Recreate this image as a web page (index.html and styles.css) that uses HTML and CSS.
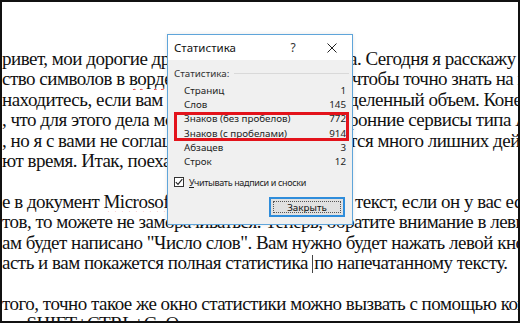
FILE: index.html
```html
<!DOCTYPE html>
<html lang="ru">

<head>
    <meta charset="UTF-8">
    <title>Статистика</title>
    <link rel="stylesheet" href="styles.css">
</head>

<body>
    <div class="screen">
        <!-- Document text behind the dialog -->
        <div class="doc">
            <p class="ln split"><span class="l">ривет, мои дорогие друзья и гости</span><span class="r">а. Сегодня я расскажу вам</span></p>
            <p class="ln split"><span class="l">ство символов в <span class="typo">ворде</span>, чтобы</span><span class="r pad2">чтобы точно знать на каком</span></p>
            <p class="ln split"><span class="l">находитесь, если вам нужен опре</span><span class="r">деленный объем. Конечно</span></p>
            <p class="ln split"><span class="l">, что для этого дела можно использовать</span><span class="r">ронние сервисы типа <span class="typo">Адвего</span></span></p>
            <p class="ln split"><span class="l">, но я с вами не соглашусь, потому что</span><span class="r">тся много лишних действий</span></p>
            <p class="ln">ют время. Итак, поехали.</p>
            <p class="ln">&nbsp;</p>
            <p class="ln split"><span class="l">е в документ <span class="typo">Microsoft</span> Word уже есть</span><span class="r pad6">текст, если он у вас есть</span></p>
            <p class="ln">тов, то можете не заморачиваться. Теперь, обратите внимание в левый</p>
            <p class="ln">ам будет написано "Число слов". Вам нужно будет нажать левой кнопкой</p>
            <p class="ln">асть и вам покажется полная статистика <span class="caret"></span>по напечатанному тексту.</p>
            <p class="ln">&nbsp;</p>
            <p class="ln">того, точно такое же окно статистики можно вызвать с помощью комбинации</p>
            <p class="ln">ом SHIFT+CTRL+G. Она откроется сразу же.</p>
        </div>

        <!-- Word count dialog -->
        <div class="dialog">
            <div class="titlebar">
                <span class="title">Статистика</span>
                <span class="help">?</span>
                <span class="close">
                    <svg width="10" height="10" viewBox="0 0 10 10">
                        <path d="M0.5 0.5 L9.5 9.5 M9.5 0.5 L0.5 9.5" stroke="#222" stroke-width="1" fill="none" />
                    </svg>
                </span>
            </div>
            <div class="dlg-body">
                <div class="group">
                    <span>Статистика:</span>
                    <span class="rule"></span>
                </div>
                <div class="stats">
                    <div class="row"><span>Страниц</span><span>1</span></div>
                    <div class="row"><span>Слов</span><span>145</span></div>
                    <div class="hl">
                        <div class="row"><span>Знаков (без пробелов)</span><span>772</span></div>
                        <div class="row"><span>Знаков (с пробелами)</span><span>914</span></div>
                    </div>
                    <div class="row"><span>Абзацев</span><span>3</span></div>
                    <div class="row"><span>Строк</span><span>12</span></div>
                </div>
                <div class="check-row">
                    <span class="checkbox">
                        <svg width="8" height="8" viewBox="0 0 8 8">
                            <path d="M0.8 4.2 L3 6.4 L7.3 1.2" stroke="#222" stroke-width="1.1" fill="none" />
                        </svg>
                    </span>
                    <span class="check-label"><u>У</u>читывать надписи и сноски</span>
                </div>
                <div class="actions">
                    <button class="btn">Закрыть</button>
                </div>
            </div>
        </div>
    </div>
</body>

</html>
```

FILE: styles.css
```css
body {
    margin: 0;
    padding: 0;
    background: #fff;
}

.screen {
    position: relative;
    width: 520px;
    height: 323px;
    box-sizing: border-box;
    border: 2px solid #111;
    overflow: hidden;
    background: #fff;
}

/* Document text */
.doc {
    padding-top: 47px;
    font-family: "Liberation Serif", "Times New Roman", serif;
    font-size: 19px;
    letter-spacing: -0.5px;
    color: #111;
}

.ln {
    margin: 0;
    height: 20.4px;
    line-height: 20.4px;
    white-space: nowrap;
    overflow: hidden;
}

.split {
    display: flex;
}

.split .l {
    flex: none;
    width: 347px;
    overflow: hidden;
}

.split .r {
    flex: none;
}

.pad2 {
    padding-left: 3px;
}

.pad6 {
    padding-left: 6px;
}

.typo {
    text-decoration: underline wavy #e0262b;
    text-decoration-thickness: 1px;
    text-underline-offset: 3px;
}

.caret {
    display: inline-block;
    width: 1px;
    height: 18px;
    margin-right: 1px;
    vertical-align: -4px;
    background: #444;
}

/* Dialog */
.dialog {
    position: absolute;
    left: 165px;
    top: 32px;
    width: 186px;
    height: 191px;
    box-sizing: border-box;
    border: 1px solid #5fa5da;
    background: #f0f0f0;
    font-family: "Noto Sans", "Open Sans", sans-serif;
    font-size: 9.8px;
    color: #1e1e1e;
    box-shadow: 0 0 4px rgba(0, 0, 0, 0.1);
}

.titlebar {
    display: flex;
    align-items: center;
    height: 25px;
    padding-left: 6px;
    background: #fff;
}

.title {
    flex: 1;
    font-size: 11.5px;
    color: #111;
}

.help {
    width: 38px;
    text-align: center;
    font-size: 12px;
    color: #333;
}

.close {
    display: flex;
    justify-content: center;
    align-items: center;
    width: 40px;
}

.dlg-body {
    padding: 6px 0 0 6px;
}

.group {
    display: flex;
    align-items: center;
    height: 14px;
    color: #333;
}

.rule {
    flex: 1;
    height: 1px;
    margin: 0 3px 0 5px;
    background: #d9d9d9;
}

.stats {
    margin-top: 4px;
    padding: 0 6px 0 10px;
}

.row {
    display: flex;
    justify-content: space-between;
    height: 14.2px;
    line-height: 14.2px;
}

.hl {
    position: relative;
}

.hl::after {
    content: "";
    position: absolute;
    left: -10px;
    right: -3px;
    top: 0;
    bottom: 0;
    border: 3px solid #e3131b;
}

.check-row {
    display: flex;
    align-items: center;
    height: 14px;
    margin-top: 6px;
}

.checkbox {
    display: flex;
    justify-content: center;
    align-items: center;
    width: 8px;
    height: 8px;
    border: 1px solid #333;
    background: #fff;
}

.check-label {
    margin-left: 5px;
    font-size: 9px;
    letter-spacing: -0.35px;
}

.check-label u {
    text-decoration-thickness: 1px;
}

.actions {
    display: flex;
    justify-content: flex-end;
    margin-top: 8px;
    padding-right: 7px;
}

.btn {
    position: relative;
    width: 76px;
    height: 20px;
    padding: 0;
    border: 2px solid #2f8ddb;
    background: #e1e1e1;
    font-family: "Noto Sans", "Open Sans", sans-serif;
    font-size: 9.8px;
    color: #111;
}

.btn::before {
    content: "";
    position: absolute;
    left: 2px;
    right: 2px;
    top: 2px;
    bottom: 2px;
    border: 1px dotted #555;
}
```
